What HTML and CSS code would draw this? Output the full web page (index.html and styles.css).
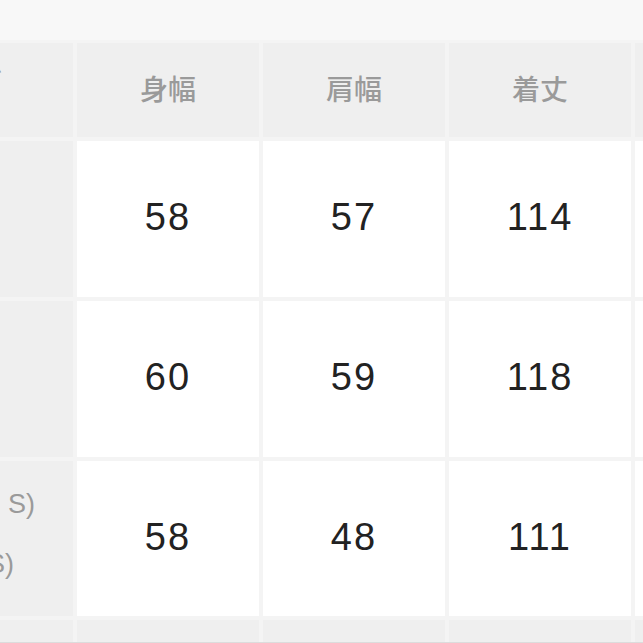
FILE: index.html
```html
<!DOCTYPE html>
<html lang="ja">
<head>
<meta charset="utf-8">
<title>サイズ表</title>
<link rel="stylesheet" href="styles.css">
</head>
<body>
<div class="topbar"></div>
<div class="sizetable">
  <div class="cell head label"><span class="l-head">サイズ</span></div>
  <div class="cell head">身幅</div>
  <div class="cell head">肩幅</div>
  <div class="cell head">着丈</div>
  <div class="cell head"></div>

  <div class="cell label"></div>
  <div class="cell num">58</div>
  <div class="cell num">57</div>
  <div class="cell num">114</div>
  <div class="cell num"></div>

  <div class="cell label"></div>
  <div class="cell num">60</div>
  <div class="cell num">59</div>
  <div class="cell num">118</div>
  <div class="cell num"></div>

  <div class="cell label multi"><span class="l1">(フリー S)</span><span class="l2">(LS)</span></div>
  <div class="cell num">58</div>
  <div class="cell num">48</div>
  <div class="cell num">111</div>
  <div class="cell num"></div>

  <div class="cell foot"></div>
  <div class="cell foot"></div>
  <div class="cell foot"></div>
  <div class="cell foot"></div>
  <div class="cell foot"></div>
</div>
<div class="bottomline"></div>
</body>
</html>
```

FILE: styles.css
```css
html, body {
  margin: 0;
  padding: 0;
  width: 643px;
  height: 643px;
  overflow: hidden;
  background: #f4f4f4;
  font-family: "Liberation Sans", "Noto Sans CJK JP", sans-serif;
}

.topbar {
  height: 40px;
  background: #f8f8f8;
  box-shadow: 0 1px 2px rgba(0, 0, 0, 0.03);
}

.sizetable {
  display: grid;
  grid-template-columns: 73px 182px 182px 182px 182px;
  grid-template-rows: 94px 156px 156px 155px 22px;
  gap: 4px;
  padding-top: 3px;
  background: #f4f4f4;
}

.cell {
  display: flex;
  align-items: center;
  justify-content: center;
  overflow: hidden;
  white-space: nowrap;
}

.head {
  background: #efefef;
  color: #9a9a9a;
  font-family: "Noto Sans CJK JP", sans-serif;
  font-size: 28px;
  font-weight: 500;
  padding-bottom: 4px;
  box-sizing: border-box;
}

.label {
  background: #efefef;
  justify-content: flex-end;
  color: #9a9a9a;
  font-size: 27px;
}

.head.label {
  font-size: 28px;
}

.l-head {
  margin-right: 71px;
  padding-bottom: 14px;
}

.num {
  background: #ffffff;
  color: #222222;
  font-size: 38px;
  letter-spacing: 2px;
  padding-bottom: 3px;
  box-sizing: border-box;
}

.multi {
  flex-direction: column;
  align-items: flex-end;
  justify-content: center;
  gap: 30px;
  padding-bottom: 10px;
  box-sizing: border-box;
}

.l1 {
  margin-right: 38px;
  line-height: 30px;
}

.l2 {
  margin-right: 59px;
  line-height: 30px;
}

.foot {
  background: #efefef;
}

.bottomline {
  height: 4px;
  background: #dcdcdc;
}
```
